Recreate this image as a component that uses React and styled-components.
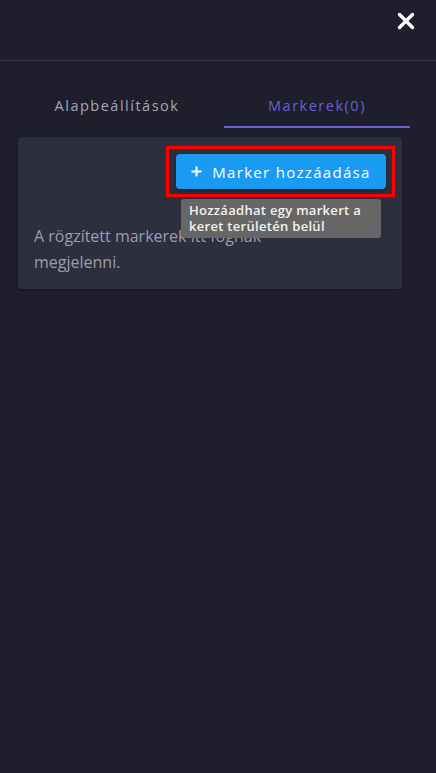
import React, { useState } from "react";
import styled, { createGlobalStyle } from "styled-components";

const GlobalStyle = createGlobalStyle`
  html, body {
    margin: 0;
    padding: 0;
    background: #1f1e2c;
    font-family: "Open Sans", "Noto Sans", sans-serif;
  }
`;

const Page = styled.div`
  width: 436px;
  height: 773px;
  background: #1f1e2c;
  display: flex;
  flex-direction: column;
`;

const Header = styled.div`
  height: 61px;
  border-bottom: 1px solid #34333f;
  display: flex;
  justify-content: flex-end;
  align-items: flex-start;
  padding: 12px 21px 0 0;
  box-sizing: border-box;
`;

const CloseButton = styled.button`
  background: none;
  border: none;
  padding: 0;
  width: 18px;
  height: 18px;
  cursor: pointer;
  display: flex;
`;

const Tabs = styled.div`
  display: grid;
  grid-template-columns: 186px 186px;
  column-gap: 14px;
  margin: 28px 0 0 24px;
`;

const Tab = styled.button`
  background: none;
  border: none;
  height: 39px;
  padding: 0 0 4px;
  font-family: "Open Sans", sans-serif;
  font-size: 14.5px;
  font-weight: 500;
  letter-spacing: 1.5px;
  color: ${p => (p.active ? "#6a5fd8" : "#a5a5b3")};
  border-bottom: 2px solid ${p => (p.active ? "#6a5fd8" : "transparent")};
  cursor: pointer;
`;

const Card = styled.div`
  margin: 9px 0 0 18px;
  width: 384px;
  height: 152px;
  background: #2d2f3e;
  border-radius: 4px;
  box-shadow: 0 1px 2px rgba(0, 0, 0, 0.3);
  padding: 9px 7px 0 16px;
  box-sizing: border-box;
  display: flex;
  flex-direction: column;
`;

const ButtonRow = styled.div`
  display: flex;
  justify-content: flex-end;
  position: relative;
`;

const Highlight = styled.div`
  border: 3px solid #ff0000;
  padding: 5px 6px 5px 7px;
  position: relative;
`;

const AddButton = styled.button`
  width: 210px;
  height: 35px;
  background: #199bf4;
  border: none;
  border-radius: 4px;
  color: #ffffff;
  font-family: "Open Sans", sans-serif;
  font-size: 15px;
  font-weight: 500;
  letter-spacing: 1.3px;
  display: flex;
  align-items: center;
  justify-content: center;
  gap: 10px;
  box-shadow: 0 2px 4px rgba(0, 0, 0, 0.35);
  cursor: pointer;
`;

const Tooltip = styled.div`
  position: absolute;
  top: 50px;
  left: 12px;
  width: 200px;
  height: 39px;
  box-sizing: border-box;
  padding: 3px 8px;
  background: #666666;
  border-radius: 3px;
  z-index: 2;
`;

const TooltipText = styled.div`
  width: 184px;
  color: #f2f2f2;
  font-family: "Open Sans", sans-serif;
  font-size: 13px;
  font-weight: 600;
  letter-spacing: 0.3px;
  line-height: 16px;
`;

const EmptyText = styled.p`
  margin: 26px 0 0;
  width: 300px;
  color: #9d9daf;
  font-family: "Open Sans", sans-serif;
  font-size: 16px;
  line-height: 26px;
`;

const Plus = () => (
  <svg width="11" height="11" viewBox="0 0 11 11">
    <path d="M5.5 0.5v10M0.5 5.5h10" stroke="#fff" strokeWidth="2" />
  </svg>
);

const CloseIcon = () => (
  <svg width="18" height="18" viewBox="0 0 18 18">
    <path d="M2.5 2.5l13 13M15.5 2.5l-13 13" stroke="#fff" strokeWidth="3.4" strokeLinecap="round" />
  </svg>
);

const App = () => {
  const [tab, setTab] = useState("markers");
  const markers = [];

  return (
    <Page>
      <GlobalStyle />
      <Header>
        <CloseButton aria-label="close">
          <CloseIcon />
        </CloseButton>
      </Header>
      <Tabs>
        <Tab active={tab === "basic"} onClick={() => setTab("basic")}>
          Alapbeállítások
        </Tab>
        <Tab active={tab === "markers"} onClick={() => setTab("markers")}>
          Markerek({markers.length})
        </Tab>
      </Tabs>
      <Card>
        <ButtonRow>
          <Highlight>
            <AddButton>
              <Plus />
              Marker hozzáadása
            </AddButton>
            <Tooltip>
              <TooltipText>Hozzáadhat egy markert a keret területén belül</TooltipText>
            </Tooltip>
          </Highlight>
        </ButtonRow>
        <EmptyText>A rögzített markerek itt fognak megjelenni.</EmptyText>
      </Card>
    </Page>
  );
};

export default App;
